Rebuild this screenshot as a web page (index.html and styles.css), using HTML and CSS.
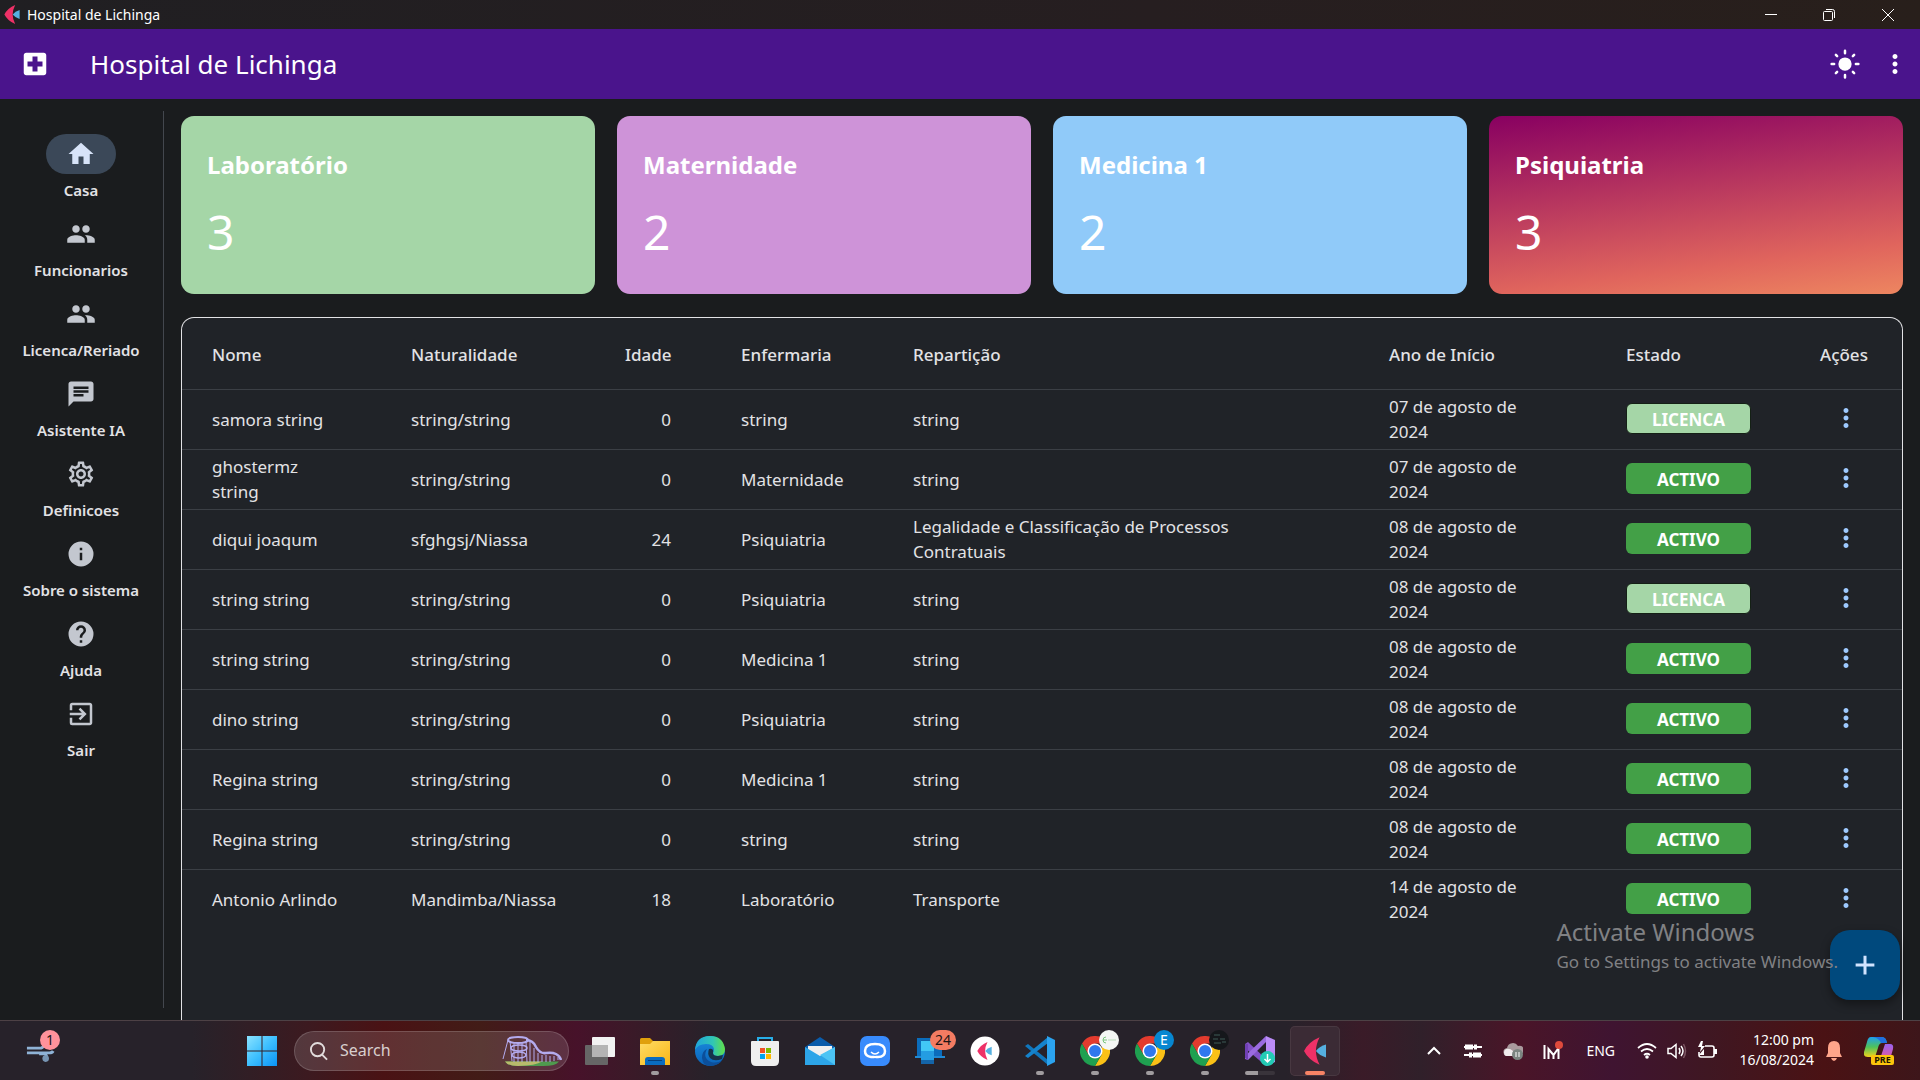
FILE: index.html
```html
<!DOCTYPE html>
<html lang="pt">
<head>
<meta charset="utf-8">
<title>Hospital de Lichinga</title>
<link rel="stylesheet" href="styles.css">
</head>
<body>
<svg class="defs" aria-hidden="true">
  <defs>
    <linearGradient id="g-start" x1="0" y1="0" x2="1" y2="1"><stop offset="0" stop-color="#8be3ff"/><stop offset=".5" stop-color="#3dbfff"/><stop offset="1" stop-color="#0a93f5"/></linearGradient>
    <linearGradient id="g-folder" x1="0" y1="0" x2="1" y2="1"><stop offset="0" stop-color="#ffdc66"/><stop offset="1" stop-color="#f9b616"/></linearGradient>
    <linearGradient id="g-edge" x1="0" y1="0" x2="1" y2="0"><stop offset="0" stop-color="#1fa4dc"/><stop offset=".6" stop-color="#31c6b4"/><stop offset="1" stop-color="#62e046"/></linearGradient>
    <linearGradient id="g-edge2" x1="0" y1="0" x2="0" y2="1"><stop offset="0" stop-color="#1b8ee0"/><stop offset="1" stop-color="#0a62b8"/></linearGradient>
    <linearGradient id="g-cop" x1="0" y1="0" x2="0" y2="1"><stop offset="0" stop-color="#1fa0ee"/><stop offset=".5" stop-color="#4fc25a"/><stop offset="1" stop-color="#f2d21c"/></linearGradient>
    <linearGradient id="g-cop2" x1="0" y1="0" x2="0" y2="1"><stop offset="0" stop-color="#9a62f0"/><stop offset="1" stop-color="#f2568c"/></linearGradient>
    <symbol id="people" viewBox="0 0 24 24"><path d="M16 11c1.660 0 3-1.340 3-3s-1.340-3-3-3-3 1.340-3 3 1.340 3 3 3zm-8 0c1.660 0 3-1.340 3-3S9.660 5 8 5 5 6.340 5 8s1.340 3 3 3zm0 2c-2.330 0-7 1.170-7 3.500V19h14v-2.500c0-2.330-4.670-3.500-7-3.500zm8 0c-.29 0-.62.02-.97.05 1.160.84 1.970 1.970 1.970 3.450V19h6v-2.500c0-2.330-4.670-3.500-7-3.500z"/></symbol>
    <symbol id="more" viewBox="0 0 24 24"><path d="M12 8c1.100 0 2-.9 2-2s-.9-2-2-2-2 .9-2 2 .9 2 2 2zm0 2c-1.100 0-2 .9-2 2s.9 2 2 2 2-.9 2-2-.9-2-2-2zm0 6c-1.100 0-2 .9-2 2s.9 2 2 2 2-.9 2-2-.9-2-2-2z"/></symbol>
    <symbol id="fish" viewBox="0 0 24 30"><path fill="#ee3167" d="M17 0Q5 5 0 15q5 10 17 15-4-8-4-15t4-15z"/><path fill="#55b0e0" d="M24 8v14q-7-2-11-7 4-5 11-7z"/></symbol>
    <symbol id="chrome" viewBox="0 0 30 30"><path fill="#e33b2e" d="M2 7.500A15 15 0 0 1 28 7.500H15L8.500 18.700z"/><path fill="#fbc116" d="M28 7.500A15 15 0 0 1 15 30l6.500-11.200L22 7.500z"/><path fill="#1fa050" d="M2 7.500 8.500 18.800l6.500 3.700 6.500-3.700L15 30A15 15 0 0 1 2 7.500z"/><circle cx="15" cy="15" r="7.500" fill="#fff"/><circle cx="15" cy="15" r="6" fill="#2f78ee"/></symbol>
  </defs>
</svg>

<header class="titlebar">
  <svg class="title-logo"><use href="#fish"/></svg>
  <span class="window-title">Hospital de Lichinga</span>
  <div class="window-controls">
    <button aria-label="Minimizar"><svg viewBox="0 0 14 14"><path d="M1 6.500h12"/></svg></button>
    <button aria-label="Restaurar"><svg viewBox="0 0 14 14"><rect x="1.500" y="3.500" width="9" height="9" rx="1"/><path d="M4 1.500h6.500a2 2 0 0 1 2 2V10"/></svg></button>
    <button aria-label="Fechar"><svg viewBox="0 0 14 14"><path d="m1 1 12 12M13 1 1 13"/></svg></button>
  </div>
</header>

<div class="appbar">
  <svg class="icon" viewBox="0 0 24 24"><path fill-rule="evenodd" d="M19 3H5c-1.100 0-2 .9-2 2v14c0 1.100.9 2 2 2h14c1.100 0 2-.9 2-2V5c0-1.100-.9-2-2-2zm-1 11h-4v4h-4v-4H6v-4h4V6h4v4h4v4z"/></svg>
  <h1>Hospital de Lichinga</h1>
  <button class="app-action" aria-label="Tema"><svg class="icon" viewBox="0 0 24 24"><circle cx="12" cy="12" r="5.300"/><path class="rays" d="M12 1.300v2M12 20.700v2M1.300 12h2M20.700 12h2M4.700 4.700l1 1M18.300 18.300l1 1M4.700 19.300l1-1M18.300 5.700l1-1"/></svg></button>
  <button class="app-action app-more" aria-label="Menu"><svg class="icon"><use href="#more"/></svg></button>
</div>

<div class="workspace">
  <nav class="rail">
    <a href="#" class="rail-item active"><span class="pill"><svg class="icon" viewBox="0 0 24 24"><path d="M10 20v-6h4v6h5v-8h3L12 3 2 12h3v8z"/></svg></span>Casa</a>
    <a href="#" class="rail-item"><span class="pill"><svg class="icon"><use href="#people"/></svg></span>Funcionarios</a>
    <a href="#" class="rail-item"><span class="pill"><svg class="icon"><use href="#people"/></svg></span>Licenca/Reriado</a>
    <a href="#" class="rail-item"><span class="pill"><svg class="icon" viewBox="0 0 24 24"><path d="M20 2H4c-1.100 0-2 .9-2 2v18l4-4h14c1.100 0 2-.9 2-2V4c0-1.100-.9-2-2-2zM6 6h12v2H6zm0 3h12v2H6zm8 5H6v-2h8z"/></svg></span>Asistente IA</a>
    <a href="#" class="rail-item"><span class="pill"><svg class="icon" viewBox="0 0 24 24"><path d="M19.430 12.980c.04-.32.07-.64.07-.98s-.03-.66-.07-.98l2.110-1.650c.19-.15.24-.42.12-.64l-2-3.460c-.09-.16-.26-.25-.44-.25-.06 0-.12.010-.17.030l-2.490 1c-.52-.4-1.080-.73-1.690-.98l-.38-2.650C14.460 2.180 14.250 2 14 2h-4c-.25 0-.46.18-.49.42l-.38 2.650c-.61.25-1.170.59-1.690.98l-2.490-1c-.23-.09-.49 0-.61.22l-2 3.460c-.13.22-.07.49.12.64l2.110 1.650c-.04.32-.07.65-.07.98s.03.66.07.98l-2.110 1.650c-.19.15-.24.42-.12.64l2 3.460c.12.22.38.31.61.22l2.490-1c.52.4 1.080.73 1.690.98l.38 2.650c.03.24.24.42.49.42h4c.25 0 .46-.18.49-.42l.38-2.650c.61-.25 1.170-.59 1.690-.98l2.490 1c.23.09.49 0 .61-.22l2-3.460c.12-.22.07-.49-.12-.64l-2.110-1.650zm-1.980-1.710c.04.31.05.52.05.73s-.02.43-.05.73l-.14 1.130.89.7 1.080.84-.7 1.210-1.270-.51-1.040-.42-.9.680c-.43.32-.84.56-1.250.73l-1.060.43-.16 1.130-.2 1.350h-1.400l-.19-1.350-.16-1.130-1.060-.43c-.43-.18-.83-.41-1.230-.71l-.91-.7-1.060.43-1.270.51-.7-1.210 1.080-.84.890-.7-.14-1.130c-.03-.31-.05-.54-.05-.74s.02-.43.05-.73l.14-1.130-.89-.7-1.080-.84.7-1.210 1.270.51 1.040.42.9-.68c.43-.32.84-.56 1.250-.73l1.060-.43.16-1.130.2-1.350h1.390l.19 1.350.16 1.130 1.060.43c.43.18.83.41 1.230.71l.91.7 1.060-.43 1.270-.51.7 1.210-1.070.85-.89.7.14 1.130zM12 8c-2.210 0-4 1.790-4 4s1.790 4 4 4 4-1.790 4-4-1.790-4-4-4zm0 6c-1.100 0-2-.9-2-2s.9-2 2-2 2 .9 2 2-.9 2-2 2z"/></svg></span>Definicoes</a>
    <a href="#" class="rail-item"><span class="pill"><svg class="icon" viewBox="0 0 24 24"><path d="M12 2a10 10 0 1 0 0 20 10 10 0 0 0 0-20zm1 15h-2v-6h2v6zm0-8h-2V7h2v2z"/></svg></span>Sobre o sistema</a>
    <a href="#" class="rail-item"><span class="pill"><svg class="icon" viewBox="0 0 24 24"><path d="M12 2a10 10 0 1 0 0 20 10 10 0 0 0 0-20zm1 17h-2v-2h2v2zm2.070-7.750-.9.920C13.450 12.900 13 13.500 13 15h-2v-.5c0-1.100.45-2.100 1.170-2.830l1.240-1.260c.37-.36.59-.86.59-1.410 0-1.100-.9-2-2-2s-2 .9-2 2H8a4 4 0 0 1 8 0c0 .88-.36 1.680-.93 2.250z"/></svg></span>Ajuda</a>
    <a href="#" class="rail-item"><span class="pill"><svg class="icon" viewBox="0 0 24 24"><path d="M10.090 15.590 11.500 17l5-5-5-5-1.410 1.410L12.670 11H3v2h9.670l-2.580 2.590zM19 3H5a2 2 0 0 0-2 2v4h2V5h14v14H5v-4H3v4a2 2 0 0 0 2 2h14c1.100 0 2-.9 2-2V5c0-1.100-.9-2-2-2z"/></svg></span>Sair</a>
  </nav>

  <main class="content">
    <section class="cards">
      <article class="card lab"><h2>Laboratório</h2><p>3</p></article>
      <article class="card mat"><h2>Maternidade</h2><p>2</p></article>
      <article class="card med"><h2>Medicina 1</h2><p>2</p></article>
      <article class="card psi"><h2>Psiquiatria</h2><p>3</p></article>
    </section>

    <section class="panel">
      <table>
        <colgroup><col class="c-nome"><col class="c-nat"><col class="c-idade"><col class="c-enf"><col><col class="c-ano"><col class="c-estado"><col class="c-acoes"></colgroup>
        <thead><tr><th>Nome</th><th>Naturalidade</th><th class="num">Idade</th><th>Enfermaria</th><th>Repartição</th><th>Ano de Início</th><th>Estado</th><th>Ações</th></tr></thead>
        <tbody>
          <tr><td>samora string</td><td>string/string</td><td class="num">0</td><td>string</td><td>string</td><td>07 de agosto de 2024</td><td><span class="badge leave">LICENCA</span></td><td><button class="row-menu" aria-label="Ações"><svg class="icon"><use href="#more"/></svg></button></td></tr>
          <tr><td>ghostermz string</td><td>string/string</td><td class="num">0</td><td>Maternidade</td><td>string</td><td>07 de agosto de 2024</td><td><span class="badge">ACTIVO</span></td><td><button class="row-menu" aria-label="Ações"><svg class="icon"><use href="#more"/></svg></button></td></tr>
          <tr><td>diqui joaqum</td><td>sfghgsj/Niassa</td><td class="num">24</td><td>Psiquiatria</td><td>Legalidade e Classificação de Processos Contratuais</td><td>08 de agosto de 2024</td><td><span class="badge">ACTIVO</span></td><td><button class="row-menu" aria-label="Ações"><svg class="icon"><use href="#more"/></svg></button></td></tr>
          <tr><td>string string</td><td>string/string</td><td class="num">0</td><td>Psiquiatria</td><td>string</td><td>08 de agosto de 2024</td><td><span class="badge leave">LICENCA</span></td><td><button class="row-menu" aria-label="Ações"><svg class="icon"><use href="#more"/></svg></button></td></tr>
          <tr><td>string string</td><td>string/string</td><td class="num">0</td><td>Medicina 1</td><td>string</td><td>08 de agosto de 2024</td><td><span class="badge">ACTIVO</span></td><td><button class="row-menu" aria-label="Ações"><svg class="icon"><use href="#more"/></svg></button></td></tr>
          <tr><td>dino string</td><td>string/string</td><td class="num">0</td><td>Psiquiatria</td><td>string</td><td>08 de agosto de 2024</td><td><span class="badge">ACTIVO</span></td><td><button class="row-menu" aria-label="Ações"><svg class="icon"><use href="#more"/></svg></button></td></tr>
          <tr><td>Regina string</td><td>string/string</td><td class="num">0</td><td>Medicina 1</td><td>string</td><td>08 de agosto de 2024</td><td><span class="badge">ACTIVO</span></td><td><button class="row-menu" aria-label="Ações"><svg class="icon"><use href="#more"/></svg></button></td></tr>
          <tr><td>Regina string</td><td>string/string</td><td class="num">0</td><td>string</td><td>string</td><td>08 de agosto de 2024</td><td><span class="badge">ACTIVO</span></td><td><button class="row-menu" aria-label="Ações"><svg class="icon"><use href="#more"/></svg></button></td></tr>
          <tr><td>Antonio Arlindo</td><td>Mandimba/Niassa</td><td class="num">18</td><td>Laboratório</td><td>Transporte</td><td>14 de agosto de 2024</td><td><span class="badge">ACTIVO</span></td><td><button class="row-menu" aria-label="Ações"><svg class="icon"><use href="#more"/></svg></button></td></tr>
        </tbody>
      </table>
    </section>
  </main>

  <button class="fab" aria-label="Adicionar"><svg class="icon" viewBox="0 0 24 24"><path d="M19.500 13.200h-6.300v6.300h-2.400v-6.300H4.500v-2.400h6.300V4.500h2.400v6.300h6.300z"/></svg></button>
  <div class="watermark"><strong>Activate Windows</strong><span>Go to Settings to activate Windows.</span></div>
</div>

<footer class="taskbar">
  <button class="task widgets" aria-label="Widgets"><svg class="wind" viewBox="0 0 32 24"><path d="M1 9h15q3-1 3-5 0-3-3-3M1 14h24q3 0 4-2M14 15h5q3 0 3 4 0 3-2 3" fill="none" stroke="#8fb3d6" stroke-width="3"/><circle cx="21" cy="20" r="3.500" fill="#7795b3"/></svg><span class="count one">1</span></button>
  <div class="apps">
    <button class="task" aria-label="Iniciar"><svg class="app" viewBox="0 0 30 30"><path fill="url(#g-start)" d="M0 0h14.500v14.500H0zM15.500 0H30v14.500H15.500zM0 15.500h14.500V30H0zM15.500 15.500H30V30H15.500z"/></svg></button>
    <label class="search"><svg class="lens" viewBox="0 0 20 20"><circle cx="9" cy="8.500" r="7"/><path d="m14 14 5 5"/></svg><input type="text" placeholder="Search" aria-label="Search">
      <svg class="coaster" viewBox="0 0 60 30"><path d="M3 25.500h54q-3 4.500-16 4.500H16Q6 30 3 25.500z" fill="#4f9a4e"/><path d="M3 25.500h37q-6 4-24 4.500Q6 30 3 25.500z" fill="#b9bb6c"/><g fill="none" stroke="#b4abee"><path stroke-width="1" d="M6 4 1 23M8 5l2 20M12 7v19M16 7v19M20 7v19M24 5l1 21M28 6v20M32 12v14M36 17v9M40 19v7M44 19v7M48 20v6M52 20v5M56 21v3"/><ellipse cx="16" cy="4" rx="10" ry="3" stroke-width="2"/><ellipse cx="17" cy="12" rx="8" ry="3" stroke-width="1.500"/><ellipse cx="17" cy="19" rx="7" ry="3" stroke-width="1.500"/><path stroke-width="2.500" d="M24 4q7 0 10 7 4 7 10 6 6-1 10 1 4 2 5 6"/></g></svg></label>
    <button class="task" aria-label="Vista de tarefas"><svg class="app" viewBox="0 0 30 30"><rect x="7" y="1" width="23" height="20" rx="1" fill="#f2f2f2"/><rect y="9" width="23" height="20" rx="1" fill="#666"/><path d="M7 9h16v12H7z" fill="#b4b4b4"/></svg></button>
    <button class="task run" aria-label="Explorador"><svg class="app" viewBox="0 0 30 30"><path d="M0 3.500Q0 2 1.500 2H10l3 3h11v9H0z" fill="#e0a00c"/><path d="M0 8h10l3-3h17v24H0z" fill="url(#g-folder)"/><path d="M5 29v-5q0-3 3-3h14q3 0 3 3v5z" fill="#0a6cc0"/><path d="M8 24.500h14" stroke="#05407c"/></svg></button>
    <button class="task" aria-label="Edge"><svg class="app" viewBox="0 0 30 30"><circle cx="15" cy="15" r="15" fill="url(#g-edge2)"/><path d="M12 13q-5 9 4 13 7 2 12-3-4 7-13 7-7 0-8-8 0-7 5-9z" fill="#0c4f9a"/><path d="M0 14Q1 0 15 0q13 0 15 13 0 7-7 7-5 0-5-3 1-2 1-4-1-5-8-5Q3 8 0 14z" fill="url(#g-edge)"/><path d="M18 17q0 3 5 3l5-1-1 4q-8 3-12-1-3-4-1-9 5-1 4 4z" fill="#17334b"/></svg></button>
    <button class="task" aria-label="Loja"><svg class="app" viewBox="0 0 30 30"><path d="M8 6V2h14v4" fill="none" stroke="#27aee8" stroke-width="2"/><path d="M1 6q0-1 1-1h26q1 0 1 1v19q0 5-5 5H6q-5 0-5-5z" fill="#efefef"/><path fill="#f15125" d="M10 12h5v5h-5z"/><path fill="#7fba00" d="M16 12h5v5h-5z"/><path fill="#00a4ef" d="M10 18h5v5h-5z"/><path fill="#ffb900" d="M16 18h5v5h-5z"/></svg></button>
    <button class="task" aria-label="Correio"><svg class="app" viewBox="0 0 30 30"><path d="M0 11 15 1l15 10v6H0z" fill="#0a5cab"/><path d="M3 10h24v9l-12 3-12-5z" fill="#f0f0f0"/><path d="M0 11v18h30V11L15 20z" fill="#2da5e8"/><path d="M30 11v18L15 19z" fill="#4cc4f4"/></svg></button>
    <button class="task" aria-label="Assistente"><svg class="app" viewBox="0 0 30 30"><rect width="30" height="30" rx="7" fill="#388bfc"/><path d="M14 21h-3q-6-1-6-6 0-7 10-7t10 7q0 6-7 6h-2" fill="none" stroke="#fff" stroke-width="2.500" stroke-linecap="round"/><path d="M11 16q4 4 8 0" fill="none" stroke="#fff" stroke-width="1.500"/></svg></button>
    <button class="task" aria-label="Telefone"><svg class="app" viewBox="0 0 30 30"><path d="M2 2h25v20H2z" fill="#0b6dbc"/><path d="M0 20h30v2H0z" fill="#1f8ad6"/><path d="M6 4h13v24H6z" fill="#1464a8"/><path d="M6 5h13v10H6z" fill="#42c7f5"/><path d="M6 15h13v9H6z" fill="#249de2"/></svg><span class="count">24</span></button>
    <button class="task" aria-label="Flet"><svg class="app" viewBox="0 0 30 30"><circle cx="15" cy="15" r="14.500" fill="#fff"/><use href="#fish" x="7" y="6" width="15" height="18"/></svg></button>
    <button class="task run" aria-label="Visual Studio Code"><svg class="app" viewBox="0 0 30 30"><path d="m0 10 3-2 20 16v5z" fill="#1077bd"/><path d="m0 20 3 2L23 7V1z" fill="#1583cc"/><path d="m22 0 8 4v22l-8 4z" fill="#2ba3ef"/></svg></button>
    <button class="task run" aria-label="Chrome"><svg class="app"><use href="#chrome"/></svg><svg class="profile" viewBox="0 0 20 20"><circle cx="10" cy="10" r="10" fill="#f4f6f4"/><path d="M7 7a3 3 0 1 0 0 6M4 10h4" fill="none" stroke="#7bc67e"/><path d="M9 10h8" stroke="#b9dcb9"/></svg></button>
    <button class="task run" aria-label="Chrome"><svg class="app"><use href="#chrome"/></svg><span class="profile letter">E</span></button>
    <button class="task run" aria-label="Chrome"><svg class="app"><use href="#chrome"/></svg><svg class="profile" viewBox="0 0 20 20"><circle cx="10" cy="10" r="10" fill="#15171b"/><path d="M5 5h6M4 9h5M11 9h5M5 13h7M13 12h4" stroke="#3f5b57"/></svg></button>
    <button class="task busy" aria-label="Visual Studio"><svg class="app" viewBox="0 0 30 30"><path d="m0 8 3-2 18 17v7L0 12z" fill="#8352c8"/><path d="m0 23 3 1L21 6V0L0 20z" fill="#9b6be0"/><path d="M0 8h3v16l-3-2z" fill="#7040b4"/><path d="m21 0 9 4v22l-9 4z" fill="#bb8cf8"/><circle cx="22.500" cy="22.500" r="7.500" fill="#23cbb5"/><path d="M22.500 18v8m-3-3 3 3 3-3" fill="none" stroke="#fff" stroke-width="1.500"/></svg></button>
    <button class="task current" aria-label="Hospital de Lichinga"><svg class="fish-app"><use href="#fish"/></svg></button>
  </div>
  <div class="tray">
    <svg class="t-chevron" viewBox="0 0 14 10"><path d="m1 8 6-6 6 6" fill="none" stroke="#fff" stroke-width="2"/></svg>
    <svg class="t-icon" viewBox="0 0 20 20"><path d="M1 6h18M1 14h18" stroke="#fff" stroke-width="2"/><path d="M2 3.500h8v5H2zM11 3.500h3v5h-3zM10 11.500h8v5h-8zM6 11.500h3v5H6z" fill="#fff"/></svg>
    <svg class="t-icon" viewBox="0 0 20 20"><path d="M5 15a4 4 0 0 1-1-8 6 6 0 0 1 11-2 4 4 0 0 1 3 8z" fill="#a99a9d"/><path d="M3 15a4 4 0 0 1 0-7q4-1 7 2v5z" fill="#f0eced"/><circle cx="14.500" cy="13.500" r="5.500" fill="#7b8580"/><path d="M13 11v5m3-5v5" stroke="#fff"/></svg>
    <svg class="t-icon" viewBox="0 0 20 20"><path d="M1.500 4v14M5.500 18V8l5 6 5-7v11M10.500 18v-4" fill="none" stroke="#fff" stroke-width="2"/><circle cx="16" cy="4" r="4" fill="#df4a3c"/></svg>
    <span class="lang">ENG</span>
    <div class="status">
      <svg viewBox="0 0 20 20"><path d="M1 7q9-8 18 0M4 10.500q6-5 12 0M7 14q3-2.500 6 0" fill="none" stroke="#fff" stroke-width="1.700"/><circle cx="10" cy="16" r="1.800" fill="#fff"/></svg>
      <svg viewBox="0 0 20 20"><path d="M1 7.500h3l5-4v13l-5-4H1zM12 7q2 3 0 6M14 5q4 5 0 10" fill="none" stroke="#fff" stroke-width="1.500"/><path d="M16.500 3q4 7 0 14" fill="none" stroke="#7c5562" stroke-width="1.500"/></svg>
      <svg viewBox="0 0 20 20"><path d="M8 5h7q2 0 2 2v7q0 2-2 2H4q-2 0-2-2v-3" fill="none" stroke="#fff" stroke-width="1.600"/><path d="M17 8h3v5h-3zM4 0 1 6h3l-1 5 5-6H5l1-5zM2 14l5-6v6z" fill="#fff"/></svg>
    </div>
    <div class="clock"><time>12:00 pm</time><time>16/08/2024</time></div>
    <svg class="bell" viewBox="0 0 18 20"><path d="M9 0q6 0 6 7v5l2 4H1l2-4V7q0-7 6-7zM6 17h6q-1 3-3 3t-3-3z" fill="#ffa58a"/></svg>
    <span class="copilot"><svg viewBox="0 0 30 28"><path d="M7 0h11q4 0 5 6h-5q-3 0-4 5l-3 9H4q-5 0-4-5l3-10q1-5 4-5z" fill="url(#g-cop)"/><path d="M9 0h9q4 0 5 6h-6q-2-5-8-6z" fill="#1f6fe0"/><path d="M21 7h5q4 0 3 5l-2 7q-1 6-6 6h-6z" fill="url(#g-cop2)"/></svg><b>PRE</b></span>
  </div>
</footer>
</body>
</html>
```
FILE: styles.css
```css
* { box-sizing: border-box; }

body {
  margin: 0;
  height: 100vh;
  display: flex;
  flex-direction: column;
  overflow: hidden;
  background: #1a1c1e;
  color: #e2e2e5;
  font: 17px/25px "Noto Sans", "Open Sans", sans-serif;
}

button {
  border: 0;
  padding: 0;
  background: none;
  color: inherit;
  font: inherit;
}

h1, h2, p { margin: 0; font-weight: 400; }
svg { display: block; flex: none; }
.defs { position: absolute; width: 0; height: 0; }
.icon { width: 30px; height: 30px; fill: currentColor; }

/* Window title bar */
.titlebar {
  flex: none;
  height: 29px;
  display: flex;
  align-items: center;
  padding: 0 2px 0 4px;
  background: linear-gradient(90deg, #201f22, #261e20 60%, #281f1b);
  color: #fff;
}
.title-logo { width: 16px; height: 19px; }
.window-title { margin-left: 7px; font-size: 14px; }
.window-controls { margin-left: auto; display: flex; }
.window-controls button { width: 58px; height: 28px; display: grid; place-items: center; }
.window-controls button:last-child { width: 60px; }
.window-controls svg { width: 14px; height: 14px; fill: none; stroke: #fff; }

/* Application bar */
.appbar {
  flex: none;
  height: 70px;
  display: flex;
  align-items: center;
  padding: 0 10px 0 20px;
  background: #4a148c;
  color: #fff;
}
.appbar h1 { margin-left: 40px; font-size: 26px; line-height: 36px; }
.app-action { margin-left: auto; }
.app-more { margin-left: 20px; }
.rays { stroke: currentColor; stroke-width: 2; stroke-linecap: round; }

/* Main area */
.workspace {
  position: relative;
  flex: 1;
  min-height: 0;
  display: flex;
}
.rail {
  width: 164px;
  flex: none;
  display: flex;
  flex-direction: column;
  margin: 12px 0;
  padding: 23px 1px 0 0;
  border-right: 1px solid #43474e;
}
.rail-item {
  height: 80px;
  display: flex;
  flex-direction: column;
  align-items: center;
  gap: 6px;
  color: #e2e2e5;
  font-size: 15px;
  font-weight: 600;
  line-height: 20px;
  text-decoration: none;
}
.pill {
  width: 70px;
  height: 40px;
  display: grid;
  place-items: center;
  border-radius: 20px;
  color: #c3c7cf;
}
.active .pill { background: #3b4858; color: #d7e3f8; }

.content {
  flex: 1;
  min-width: 0;
  display: flex;
  flex-direction: column;
  gap: 23px;
  padding: 17px 17px 0;
}
.cards { display: grid; grid-template-columns: repeat(4, 1fr); gap: 22px; }
.card {
  height: 178px;
  padding: 31px 26px;
  border-radius: 13px;
  color: #fff;
}
.card h2 { font-size: 24px; font-weight: 700; line-height: 36px; }
.card p { margin-top: 15px; font-size: 48px; line-height: 68px; }
.lab { background: #a5d6a7; }
.mat { background: #ce93d8; }
.med { background: #90caf9; }
.psi { background: linear-gradient(173deg, #880061, #e0655d 78%, #ed8660); }

.panel {
  flex: 1;
  min-height: 0;
  overflow: hidden;
  border: 1px solid #e2e2e5;
  border-bottom: 0;
  border-radius: 13px 13px 0 0;
  background: #202328;
}
table { width: 100%; table-layout: fixed; border-collapse: collapse; }
.c-nome { width: 229px; }
.c-nat { width: 214px; }
.c-idade { width: 116px; }
.c-enf { width: 172px; }
.c-ano { width: 237px; }
.c-estado { width: 194px; }
.c-acoes { width: 82px; }
th, td { height: 60px; padding: 0 70px 0 0; text-align: left; vertical-align: middle; }
th { height: 71px; padding-top: 2px; font-weight: 500; white-space: nowrap; }
th:first-child, td:first-child { padding-left: 30px; }
th:last-child, td:last-child { padding-right: 0; }
th.num, td.num { text-align: right; }
tbody tr { border-top: 1px solid #3b3f45; }
.badge {
  display: block;
  width: 125px;
  height: 31px;
  margin-bottom: 2px;
  border-radius: 6px;
  background: #43a047;
  color: #fff;
  font-weight: 700;
  line-height: 33px;
  text-align: center;
}
.badge.leave { border: 1px solid #142015; background: #a5d6a7; line-height: 31px; }
td:nth-child(7) { padding-right: 0; }
.row-menu { display: block; margin: 0 0 2px 11px; color: #9ecaff; }

.fab {
  position: absolute;
  right: 20px;
  bottom: 20px;
  width: 70px;
  height: 70px;
  display: grid;
  place-items: center;
  border-radius: 20px;
  background: #00497d;
  color: #d1e4ff;
  box-shadow: 0 4px 10px rgba(0, 0, 0, .4);
}
.watermark {
  position: absolute;
  right: 82px;
  bottom: 46px;
  display: flex;
  flex-direction: column;
  color: #808184;
}
.watermark strong { font-size: 24px; font-weight: 400; line-height: 34px; }

/* Taskbar */
.taskbar {
  flex: none;
  height: 60px;
  display: flex;
  align-items: center;
  border-top: 1px solid #4d4145;
  background: linear-gradient(90deg, #27222a 0, #27222a 10%, #3c1a20 16%, #4a1214 20%, #421c17 25%, #47122a 30%, #3a1a28 33%, #27222a 37%, #27222a 67%, #3a1b28 71%, #30202a 74%, #4a1528 79%, #3f1431 84%, #3f1722 89%, #4a1214 95%, #3d161a);
  color: #fff;
}
.task { position: relative; width: 55px; height: 50px; display: grid; place-items: center; flex: none; }
.app { width: 30px; height: 30px; }
.fish-app { width: 22px; height: 28px; }
.widgets { margin-left: 13px; }
.wind { width: 30px; height: 24px; }
.apps { display: flex; align-items: center; margin-left: 166px; }
.count {
  position: absolute;
  top: 4px;
  right: 1px;
  min-width: 26px;
  height: 20px;
  border-radius: 10px;
  background: #f47c62;
  color: #201515;
  font-size: 14px;
  line-height: 20px;
  text-align: center;
}
.count.one { right: 8px; min-width: 20px; background: #ff929b; }
.profile { position: absolute; top: 4px; right: 3px; width: 20px; height: 20px; }
.letter { border-radius: 10px; background: #0787d1; font-size: 14px; line-height: 20px; text-align: center; }
.run::after, .busy::after, .current::after {
  content: "";
  position: absolute;
  bottom: 1px;
  left: 50%;
  width: 8px;
  height: 4px;
  margin-left: -4px;
  border-radius: 2px;
  background: #a09c9f;
}
.busy::after { width: 30px; margin-left: -15px; background: linear-gradient(90deg, #a09c9f 45%, #39343b 45%); }
.current::after { width: 20px; margin-left: -10px; background: #f78365; }
.current { width: 50px; margin-left: 3px; border-radius: 5px; background: #3b2b35; box-shadow: inset 0 0 0 1px #483841; }
.search {
  width: 275px;
  height: 40px;
  display: flex;
  align-items: center;
  margin: 0 3px 0 5px;
  padding: 0 6px 0 14px;
  border: 1px solid rgba(255, 255, 255, .16);
  border-radius: 20px;
  background: rgba(255, 255, 255, .13);
}
.lens { width: 19px; height: 20px; fill: none; stroke: #e2dcdc; stroke-width: 2; }
.search input {
  flex: 1;
  min-width: 0;
  margin-left: 12px;
  padding: 0;
  border: 0;
  background: none;
  color: #fff;
  font: inherit;
  font-size: 16px;
}
.search input::placeholder { color: #d8cfce; opacity: 1; }
.coaster { width: 60px; height: 30px; }

.tray { display: flex; align-items: center; margin-left: auto; padding-right: 26px; }
.t-chevron { width: 14px; height: 10px; margin-right: 22px; }
.t-icon { width: 20px; height: 20px; margin-right: 20px; }
.lang { margin: 0 22px 0 3px; font-size: 14px; }
.status { display: flex; gap: 10px; }
.status svg { width: 20px; height: 20px; }
.clock { width: 97px; display: flex; flex-direction: column; padding-bottom: 2px; font-size: 14px; line-height: 20px; text-align: right; }
.bell { width: 18px; height: 20px; margin: 0 21px 0 11px; }
.copilot { position: relative; width: 30px; height: 28px; }
.copilot svg { width: 30px; height: 28px; }
.copilot b {
  position: absolute;
  right: 0;
  bottom: 0;
  width: 23px;
  border-radius: 2px;
  background: #fcc50c;
  color: #1d1500;
  font-size: 9px;
  line-height: 10px;
  text-align: center;
}
```
